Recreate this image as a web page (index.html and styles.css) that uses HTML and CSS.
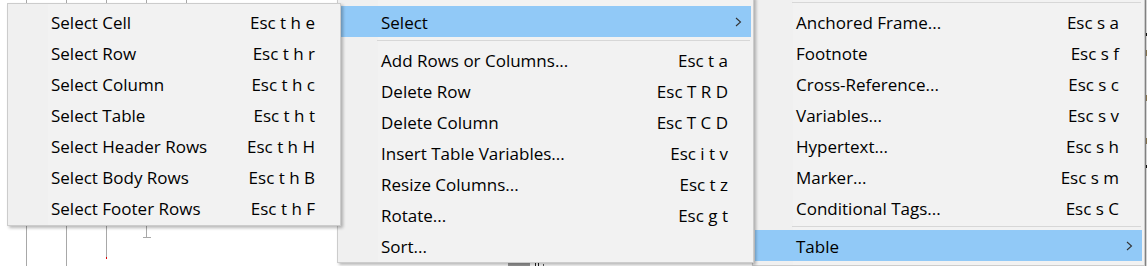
FILE: index.html
```html
<!DOCTYPE html>
<html lang="en">
<head>
<meta charset="utf-8">
<title>Table menu</title>
<link rel="stylesheet" href="styles.css">
</head>
<body>
<div class="desk">
  <svg class="doc" width="1147" height="266" viewBox="0 0 1147 266">
    <g stroke="#a8a8a8" stroke-width="1">
      <line x1="26.5" y1="0" x2="26.5" y2="266"/>
      <line x1="66.5" y1="0" x2="66.5" y2="266"/>
      <line x1="106.5" y1="0" x2="106.5" y2="258"/>
      <line x1="146.5" y1="0" x2="146.5" y2="237"/>
      <line x1="143" y1="237.5" x2="151" y2="237.5"/>
      <line x1="186.5" y1="0" x2="186.5" y2="220"/>
      <line x1="1145.5" y1="0" x2="1145.5" y2="266"/>
    </g>
    <rect x="106" y="257" width="1" height="2" fill="#e00000"/>
    <rect x="508" y="263" width="22" height="3" fill="#9a9a9a"/>
    <rect x="535" y="262" width="1" height="4" fill="#222"/>
    <rect x="538" y="263" width="1" height="3" fill="#222"/>
    <rect x="543" y="264" width="1" height="2" fill="#555"/>
    <rect x="1146" y="33" width="1" height="3" fill="#111"/>
    <rect x="1146" y="50" width="1" height="6" fill="#a08a60"/>
    <rect x="1146" y="95" width="1" height="6" fill="#a08a60"/>
    <rect x="1146" y="138" width="1" height="6" fill="#a08a60"/>
    <rect x="1146" y="165" width="1" height="3" fill="#111"/>
  </svg>

  <div class="menu menu-right">
    <div class="sep"></div>
    <div class="item"><span class="label">Anchored Frame...</span><span class="key">Esc s a</span></div>
    <div class="item"><span class="label">Footnote</span><span class="key">Esc s f</span></div>
    <div class="item"><span class="label">Cross-Reference...</span><span class="key">Esc s c</span></div>
    <div class="item"><span class="label">Variables...</span><span class="key">Esc s v</span></div>
    <div class="item"><span class="label">Hypertext...</span><span class="key">Esc s h</span></div>
    <div class="item"><span class="label">Marker...</span><span class="key">Esc s m</span></div>
    <div class="item"><span class="label">Conditional Tags...</span><span class="key">Esc s C</span></div>
    <div class="sep"></div>
    <div class="item hot"><span class="label">Table</span><span class="key"></span><svg class="arrow" width="7" height="10" viewBox="0 0 7 10"><polyline points="1,1 5.5,5 1,9" fill="none" stroke="#333" stroke-width="1.1"/></svg></div>
  </div>

  <div class="menu menu-mid">
    <div class="item hot"><span class="label">Select</span><span class="key"></span><svg class="arrow" width="7" height="10" viewBox="0 0 7 10"><polyline points="1,1 5.5,5 1,9" fill="none" stroke="#333" stroke-width="1.1"/></svg></div>
    <div class="sep"></div>
    <div class="item"><span class="label">Add Rows or Columns...</span><span class="key">Esc t a</span></div>
    <div class="item"><span class="label">Delete Row</span><span class="key">Esc T R D</span></div>
    <div class="item"><span class="label">Delete Column</span><span class="key">Esc T C D</span></div>
    <div class="item"><span class="label">Insert Table Variables...</span><span class="key">Esc i t v</span></div>
    <div class="item"><span class="label">Resize Columns...</span><span class="key">Esc t z</span></div>
    <div class="item"><span class="label">Rotate...</span><span class="key">Esc g t</span></div>
    <div class="item"><span class="label">Sort...</span><span class="key"></span></div>
  </div>

  <div class="menu menu-left">
    <div class="item"><span class="label">Select Cell</span><span class="key">Esc t h e</span></div>
    <div class="item"><span class="label">Select Row</span><span class="key">Esc t h r</span></div>
    <div class="item"><span class="label">Select Column</span><span class="key">Esc t h c</span></div>
    <div class="item"><span class="label">Select Table</span><span class="key">Esc t h t</span></div>
    <div class="item"><span class="label">Select Header Rows</span><span class="key">Esc t h H</span></div>
    <div class="item"><span class="label">Select Body Rows</span><span class="key">Esc t h B</span></div>
    <div class="item"><span class="label">Select Footer Rows</span><span class="key">Esc t h F</span></div>
  </div>
</div>
</body>
</html>
```
FILE: styles.css
```css
html, body {
  margin: 0;
  padding: 0;
  background: #ffffff;
  overflow: hidden;
}

.desk {
  position: relative;
  width: 1147px;
  height: 266px;
  overflow: hidden;
  font-family: "Open Sans", "Noto Sans", "Liberation Sans", sans-serif;
  font-size: 17px;
  color: #000;
}

.doc {
  position: absolute;
  left: 0;
  top: 0;
}

.menu {
  position: absolute;
  box-sizing: border-box;
  border: 1px solid #cccccc;
  background: linear-gradient(to right, #f0f0f0 40px, #f2f2f2 40px);
  box-shadow: 2px 2px 3px rgba(0, 0, 0, 0.28);
  padding-left: 2px;
  padding-right: 2px;
  display: flex;
  flex-direction: column;
}

.menu-right {
  left: 752px;
  top: -4px;
  width: 393px;
  height: 270px;
  padding-top: 0;
}

.menu-mid {
  left: 337px;
  top: -4px;
  width: 417px;
  height: 267px;
  padding-top: 9px;
}

.menu-left {
  left: 7px;
  top: 3px;
  width: 334px;
  height: 223px;
  padding-top: 2px;
}

.item {
  height: 31px;
  flex: none;
  display: grid;
  grid-template-columns: 1fr auto 23px;
  align-items: center;
  padding-left: 41px;
  white-space: nowrap;
  line-height: 1;
}

.item.hot {
  background: #91c9f7;
}

.key {
  text-align: right;
  padding-top: 1px;
}

.label {
  padding-top: 1px;
}

.arrow {
  grid-column: 3;
  justify-self: end;
  margin-right: 9px;
}

.sep {
  flex: none;
  height: 1px;
  background: #d7d7d7;
  margin: 3px 1px 3px 37px;
}

.menu-right .sep:first-child {
  margin-top: 5px;
}
```
